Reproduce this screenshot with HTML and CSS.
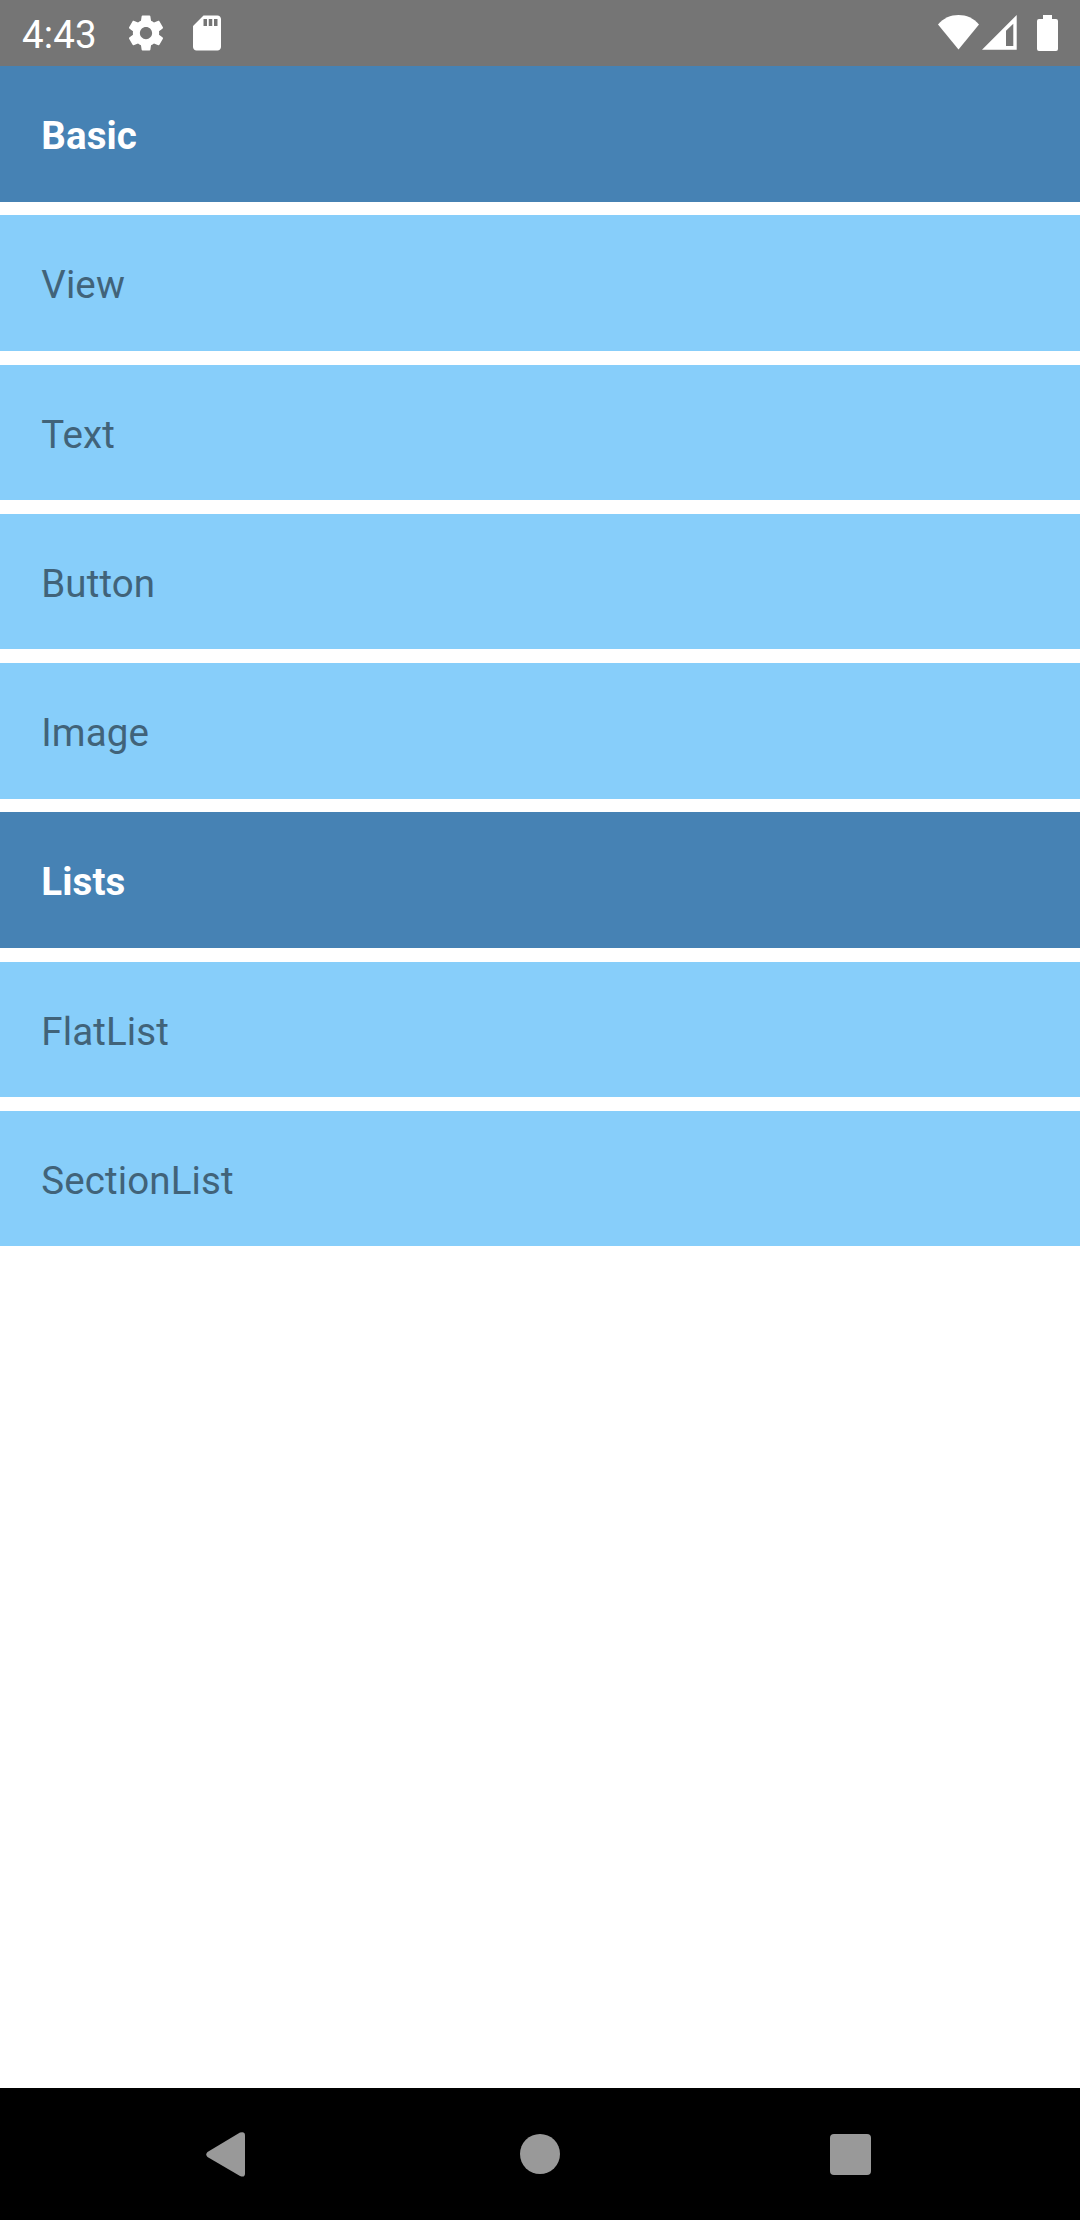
FILE: index.html
```html
<!DOCTYPE html>
<html lang="en">
<head>
<meta charset="utf-8">
<title>Components</title>
<link rel="stylesheet" href="styles.css">
</head>
<body>
<div class="screen">
  <header class="status-bar">
    <div class="status-left">
      <span class="clock">4:43</span>
      <svg class="icon-settings" viewBox="0 0 24 24"><path d="M19.43 12.98c.04-.32.07-.64.07-.98s-.03-.66-.07-.98l2.11-1.65c.19-.15.24-.42.12-.64l-2-3.46c-.12-.22-.39-.3-.61-.22l-2.49 1c-.52-.4-1.08-.73-1.69-.98l-.38-2.65C14.46 2.18 14.25 2 14 2h-4c-.25 0-.46.18-.49.42l-.38 2.65c-.61.25-1.17.59-1.69.98l-2.49-1c-.23-.09-.49 0-.61.22l-2 3.46c-.13.22-.07.49.12.64l2.11 1.65c-.04.32-.07.65-.07.98s.03.66.07.98l-2.11 1.65c-.19.15-.24.42-.12.64l2 3.46c.12.22.39.3.61.22l2.49-1c.52.4 1.08.73 1.69.98l.38 2.65c.03.24.24.42.49.42h4c.25 0 .46-.18.49-.42l.38-2.65c.61-.25 1.17-.59 1.69-.98l2.49 1c.23.09.49 0 .61-.22l2-3.46c.12-.22.07-.49-.12-.64l-2.11-1.65zM12 15.5c-1.93 0-3.5-1.57-3.5-3.5s1.57-3.5 3.5-3.5 3.5 1.57 3.5 3.5-1.57 3.5-3.5 3.5z"/></svg>
      <svg class="icon-sd" viewBox="0 0 24 24"><path d="M18 2h-8L4.02 8 4 20c0 1.1.9 2 2 2h12c1.1 0 2-.9 2-2V4c0-1.100-.9-2-2-2zm-6 6h-2V4h2v4zm3 0h-2V4h2v4zm3 0h-2V4h2v4z"/></svg>
    </div>
    <div class="status-right">
      <svg class="icon-wifi" viewBox="0 0 41 36"><path d="M20.500 34.600 0 9.500C5.500 3 12.500 0 20.500 0S35.500 3 41 9.500z"/></svg>
      <svg class="icon-signal" viewBox="0 0 35 36"><path fill-rule="evenodd" d="M0 34.700 34.700 0V34.700zM24 15.700V31h7.300V8.700z"/></svg>
      <svg class="icon-battery" viewBox="0 0 21 36"><path d="M6 0h9v4h4a2 2 0 0 1 2 2v28a2 2 0 0 1-2 2H2a2 2 0 0 1-2-2V6a2 2 0 0 1 2-2h4z"/></svg>
    </div>
  </header>
  <main class="list">
    <h2 class="row row-header">Basic</h2>
    <div class="row">View</div>
    <div class="row">Text</div>
    <div class="row">Button</div>
    <div class="row">Image</div>
    <h2 class="row row-header">Lists</h2>
    <div class="row">FlatList</div>
    <div class="row">SectionList</div>
  </main>
  <nav class="nav-bar">
    <svg class="nav-back" viewBox="0 0 39 45"><path d="M1.500 20 34 .600Q39-1 39 3.500V41.500Q39 46 34 44L1.500 25Q-1 22.500 1.500 20z"/></svg>
    <svg class="nav-home" viewBox="0 0 40 40"><circle cx="20" cy="20" r="20"/></svg>
    <svg class="nav-recent" viewBox="0 0 41 41"><rect width="41" height="41" rx="4"/></svg>
  </nav>
</div>
</body>
</html>
```
FILE: styles.css
```css
body {
  margin: 0;
  background: #fff;
  font-family: Roboto, "Liberation Sans", sans-serif;
  font-size: 38.5px;
}

.screen {
  display: flex;
  flex-direction: column;
  height: 2220px;
}

svg {
  display: block;
  flex: none;
}

.status-bar {
  display: flex;
  justify-content: space-between;
  box-sizing: border-box;
  height: 66px;
  padding: 0 22px;
  background: #757575;
  color: #fff;
  fill: #fff;
}

.status-left,
.status-right {
  display: flex;
}

.clock {
  width: 103.3px;
  letter-spacing: 0.15px;
  line-height: 69px;
}

.icon-settings,
.icon-sd {
  width: 42px;
  height: 42px;
  margin-top: 12px;
}

.icon-sd {
  margin-left: 19px;
}

.icon-wifi,
.icon-signal,
.icon-battery {
  height: 36px;
  margin-top: 15px;
}

.icon-wifi {
  width: 41px;
}

.icon-signal {
  width: 35px;
  margin: 15px 20px 0 3px;
}

.icon-battery {
  width: 21px;
}

.list {
  display: flex;
  flex: 1;
  flex-direction: column;
  gap: 13.75px;
}

.row {
  box-sizing: border-box;
  height: 135.5px;
  margin: 0;
  padding: 0 41.25px;
  background: #87cefa;
  color: #416379;
  font-size: 38.5px;
  font-weight: 400;
  letter-spacing: 0.12px;
  line-height: 139px;
}

.row-header {
  background: #4682b4;
  color: #fff;
  font-weight: 700;
}

.nav-bar {
  display: flex;
  align-items: flex-start;
  box-sizing: border-box;
  height: 132px;
  padding: 46px 0 0 206px;
  background: #000;
  fill: #999;
}

.nav-back {
  width: 39px;
  height: 45px;
  margin: -2px 275px 0 0;
}

.nav-home {
  width: 40px;
  height: 40px;
  margin-right: 270px;
}

.nav-recent {
  width: 41px;
  height: 41px;
}
```
